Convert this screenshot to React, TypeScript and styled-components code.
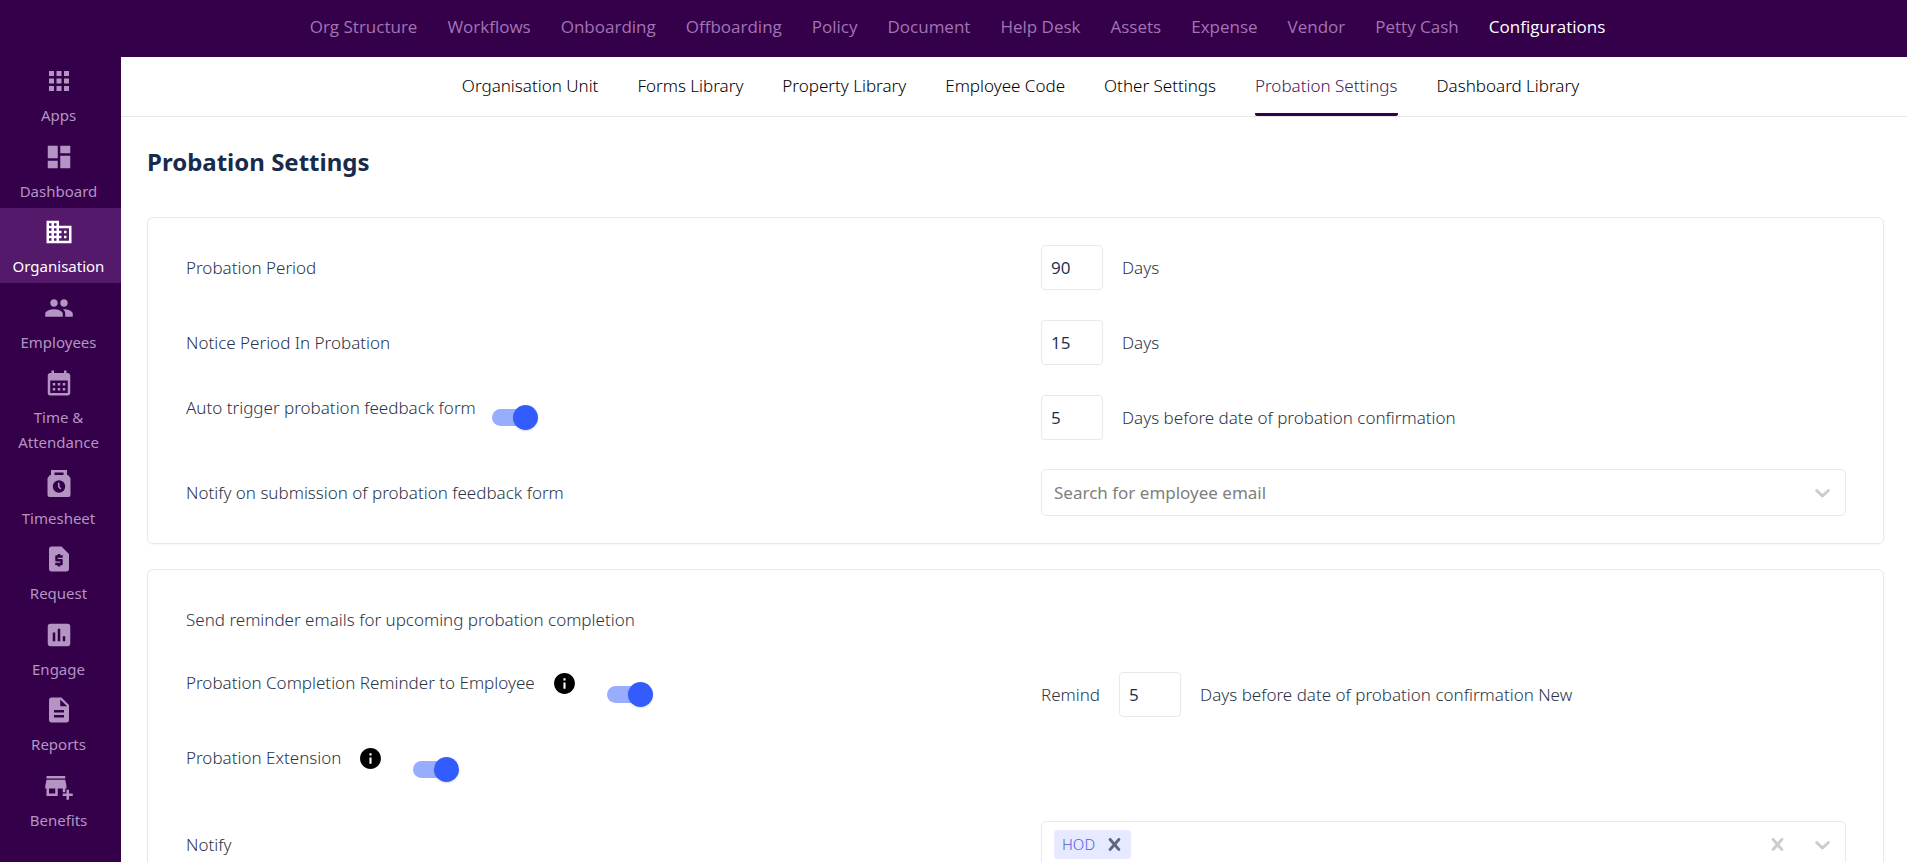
import React, { useState } from "react";
import styled, { createGlobalStyle } from "styled-components";
import {
  MdApps,
  MdDashboard,
  MdBusiness,
  MdGroup,
  MdCalendarMonth,
  MdRequestPage,
  MdInsertChart,
  MdDescription,
  MdAddBusiness,
  MdInfo,
} from "react-icons/md";

const colors = {
  brand: "#34004a",
  brandActive: "#54196b",
  muted: "#b394c2",
  navMuted: "#a274b4",
  text: "#2a3446",
  heading: "#172b4d",
  line: "#e9e9ea",
  blue: "#335cff",
};

const GlobalStyle = createGlobalStyle`
  *, *::before, *::after { box-sizing: border-box; }
  body {
    margin: 0;
    background: #fff;
    color: ${colors.text};
    font: 300 17px/25px "Noto Sans", "Open Sans", sans-serif;
  }
  button, input { font: inherit; color: inherit; }
  ul { list-style: none; margin: 0; padding: 0; }
  a { color: inherit; text-decoration: none; }
`;

const Shell = styled.div`
  display: grid;
  grid-template-columns: 121px minmax(0, 1fr);
  grid-template-rows: 57px minmax(0, 1fr);
  height: 100vh;
`;

const TopBar = styled.nav`
  grid-column: 1 / -1;
  background: ${colors.brand};
  padding-left: 8px;
`;

const TopList = styled.ul`
  display: flex;
  justify-content: center;
  align-items: center;
  gap: 30px;
  height: 53px;
  white-space: nowrap;
`;

const TopLink = styled.a<{ $active?: boolean }>`
  color: ${(p) => (p.$active ? "#fff" : colors.navMuted)};
  font-family: "Open Sans", "Noto Sans", sans-serif;
  font-weight: 400;
`;

const SideBar = styled.nav`
  background: ${colors.brand};
  overflow: hidden;
`;

const SideList = styled.ul`
  display: flex;
  flex-direction: column;
  justify-content: space-between;
  height: 100%;
  padding-bottom: 25px;
`;

const SideLink = styled.a<{ $active?: boolean }>`
  display: flex;
  flex-direction: column;
  align-items: center;
  gap: 7px;
  padding: 9px 6px 4px 2px;
  text-align: center;
  font-weight: 400;
  font-size: 15px;
  color: ${(p) => (p.$active ? "#fff" : colors.muted)};
  background: ${(p) => (p.$active ? colors.brandActive : "transparent")};
  svg { width: 30px; height: 30px; flex: none; }
`;

const Main = styled.main`
  overflow: hidden;
`;

const Tabs = styled.nav`
  border-bottom: 1px solid ${colors.line};
  padding-left: 13px;
`;

const TabList = styled.ul`
  display: flex;
  justify-content: center;
  gap: 39px;
  white-space: nowrap;
`;

const TabLink = styled.a<{ $active?: boolean }>`
  display: block;
  padding: 16px 0 15px;
  color: ${(p) => (p.$active ? "#40205a" : "#000")};
  border-bottom: 3px solid ${(p) => (p.$active ? colors.brand : "transparent")};
  border-radius: 2px;
`;

const Content = styled.div`
  padding: 29px 23px 0 26px;
`;

const Title = styled.h1`
  margin: 0 0 39px;
  font-size: 24px;
  line-height: 32px;
  font-weight: 700;
  color: ${colors.heading};
`;

const Card = styled.section`
  border: 1px solid ${colors.line};
  border-radius: 6px;
  box-shadow: 0 1px 3px rgba(0, 0, 0, 0.04);
  padding: 12px 37px 13px 38px;
  margin-bottom: 25px;
`;

const Row = styled.div`
  display: grid;
  grid-template-columns: 1fr 1fr;
  column-gap: 50px;
  align-items: center;
  height: 75px;
`;

const ToggleRow = styled.div<{ $tall?: boolean }>`
  display: flex;
  align-items: flex-start;
  height: ${(p) => (p.$tall ? 49 : 45)}px;
`;

const Field = styled.div`
  display: flex;
  align-items: center;
  gap: 19px;
`;

const NumberBox = styled.input`
  width: 62px;
  height: 45px;
  padding: 0 9px;
  border: 1px solid ${colors.line};
  border-radius: 4px;
  background: #fff;
  color: ${colors.heading};
  font-family: "Open Sans", "Noto Sans", sans-serif;
  font-weight: 400;
`;

const Switch = styled.input`
  appearance: none;
  display: grid;
  align-items: center;
  align-self: center;
  width: 46px;
  height: 25px;
  margin: 0 0 0 16px;
  cursor: pointer;
  &::before, &::after { content: ""; grid-area: 1 / 1; }
  &::before {
    width: 42px;
    height: 17px;
    border-radius: 9px;
    background: #c4c4c4;
  }
  &::after {
    width: 25px;
    height: 25px;
    border-radius: 50%;
    background: #fafafa;
    box-shadow: 0 1px 2px rgba(0, 0, 0, 0.15);
  }
  &:checked::before { background: #99adff; }
  &:checked::after { justify-self: end; background: ${colors.blue}; }
`;

const InfoButton = styled.button`
  display: flex;
  margin: 0 14px 0 17px;
  padding: 1px 0;
  border: 0;
  background: none;
  color: #000;
  svg { width: 25px; height: 25px; }
`;

const SelectBox = styled.div`
  display: flex;
  align-items: center;
  height: 47px;
  padding: 0 10px 0 12px;
  border: 1px solid ${colors.line};
  border-radius: 5px;
`;

const SelectInput = styled.input`
  flex: 1;
  min-width: 0;
  border: 0;
  padding: 0;
  outline: none;
  background: none;
  font-weight: 400;
  &::placeholder { color: #808080; opacity: 1; }
`;

const IconButton = styled.button<{ $gap?: number }>`
  display: flex;
  padding: 0;
  margin-right: ${(p) => p.$gap ?? 0}px;
  border: 0;
  background: none;
  color: #ccc;
`;

const Tag = styled.span`
  display: flex;
  align-items: center;
  gap: 7px;
  height: 29px;
  padding: 0 4px 0 8px;
  border-radius: 4px;
  background: #e6e9ff;
  color: #5060dc;
  font-size: 15px;
`;

const TagButton = styled.button`
  display: flex;
  padding: 0;
  border: 0;
  background: none;
  color: #5f6680;
`;

const TimesheetIcon = () => (
  <svg viewBox="0 0 30 30" fill="currentColor" fillRule="evenodd" aria-hidden="true">
    <path d="M7 1h16v5h1l2.500 3v17a2 2 0 0 1-2 2h-19a2 2 0 0 1-2-2V9L6 6h1zm3.500 2.500V6h9V3.500zM15 11.300a6.200 6.200 0 1 0 0 12.400a6.200 6.200 0 1 0 0-12.400z" />
    <path d="M14 13.800h1.500v3.700l1.800 2-1 1-2.300-2.500z" />
  </svg>
);

const Chevron = () => (
  <svg width="25" height="25" viewBox="0 0 20 20" fill="currentColor" aria-hidden="true">
    <path d="M4.516 7.548c0.436-0.446 1.043-0.481 1.576 0l3.908 3.747 3.908-3.747c0.533-0.481 1.141-0.446 1.574 0 0.436 0.445 0.408 1.197 0 1.615-0.406 0.418-4.695 4.502-4.695 4.502-0.217 0.223-0.502 0.335-0.787 0.335s-0.570-0.112-0.789-0.335c0 0-4.287-4.084-4.695-4.502s-0.436-1.170 0-1.615z" />
  </svg>
);

const Cross = () => (
  <svg width="25" height="25" viewBox="0 0 20 20" fill="currentColor" aria-hidden="true">
    <path d="M14.348 14.849c-0.469 0.469-1.229 0.469-1.697 0l-2.651-3.030-2.651 3.029c-0.469 0.469-1.229 0.469-1.697 0-0.469-0.469-0.469-1.229 0-1.697l2.758-3.150-2.759-3.152c-0.469-0.469-0.469-1.228 0-1.697s1.228-0.469 1.697 0l2.652 3.031 2.651-3.031c0.469-0.469 1.228-0.469 1.697 0s0.469 1.229 0 1.697l-2.758 3.152 2.758 3.150c0.469 0.469 0.469 1.229 0 1.698z" />
  </svg>
);

const topItems = [
  "Org Structure", "Workflows", "Onboarding", "Offboarding", "Policy", "Document",
  "Help Desk", "Assets", "Expense", "Vendor", "Petty Cash", "Configurations",
];

const sideItems = [
  { label: "Apps", Icon: MdApps },
  { label: "Dashboard", Icon: MdDashboard },
  { label: "Organisation", Icon: MdBusiness },
  { label: "Employees", Icon: MdGroup },
  { label: "Time & Attendance", Icon: MdCalendarMonth },
  { label: "Timesheet", Icon: TimesheetIcon },
  { label: "Request", Icon: MdRequestPage },
  { label: "Engage", Icon: MdInsertChart },
  { label: "Reports", Icon: MdDescription },
  { label: "Benefits", Icon: MdAddBusiness },
];

const tabItems = [
  "Organisation Unit", "Forms Library", "Property Library", "Employee Code",
  "Other Settings", "Probation Settings", "Dashboard Library",
];

const NumberField = ({ id, initial }: { id: string; initial: string }) => {
  const [value, setValue] = useState(initial);
  return (
    <NumberBox
      id={id}
      value={value}
      inputMode="numeric"
      onChange={(e) => setValue(e.target.value)}
    />
  );
};

const ToggleField = ({ id, label, info }: { id: string; label: string; info?: boolean }) => (
  <ToggleRow $tall={info}>
    <label htmlFor={id}>{label}</label>
    {info && (
      <InfoButton type="button" aria-label={`About ${label}`}>
        <MdInfo />
      </InfoButton>
    )}
    <Switch id={id} type="checkbox" role="switch" defaultChecked />
  </ToggleRow>
);

export default function App() {
  return (
    <>
      <GlobalStyle />
      <Shell>
        <TopBar aria-label="Organisation">
          <TopList>
            {topItems.map((item) => (
              <li key={item}>
                <TopLink href="#" $active={item === "Configurations"}>{item}</TopLink>
              </li>
            ))}
          </TopList>
        </TopBar>
        <SideBar aria-label="Modules">
          <SideList>
            {sideItems.map(({ label, Icon }) => (
              <li key={label}>
                <SideLink href="#" $active={label === "Organisation"}>
                  <Icon />
                  <span>{label}</span>
                </SideLink>
              </li>
            ))}
          </SideList>
        </SideBar>
        <Main>
          <Tabs aria-label="Configurations">
            <TabList>
              {tabItems.map((item) => (
                <li key={item}>
                  <TabLink href="#" $active={item === "Probation Settings"}>{item}</TabLink>
                </li>
              ))}
            </TabList>
          </Tabs>
          <Content>
            <Title>Probation Settings</Title>
            <Card>
              <Row>
                <label htmlFor="period">Probation Period</label>
                <Field>
                  <NumberField id="period" initial="90" />
                  <span>Days</span>
                </Field>
              </Row>
              <Row>
                <label htmlFor="notice">Notice Period In Probation</label>
                <Field>
                  <NumberField id="notice" initial="15" />
                  <span>Days</span>
                </Field>
              </Row>
              <Row>
                <ToggleField id="auto" label="Auto trigger probation feedback form" />
                <Field>
                  <NumberField id="feedback-days" initial="5" />
                  <label htmlFor="feedback-days">Days before date of probation confirmation</label>
                </Field>
              </Row>
              <Row>
                <label htmlFor="submission">Notify on submission of probation feedback form</label>
                <SelectBox>
                  <SelectInput id="submission" role="combobox" aria-expanded="false" placeholder="Search for employee email" />
                  <IconButton type="button" aria-label="Open"><Chevron /></IconButton>
                </SelectBox>
              </Row>
            </Card>
            <Card>
              <Row>
                <span>Send reminder emails for upcoming probation completion</span>
              </Row>
              <Row>
                <ToggleField id="reminder" label="Probation Completion Reminder to Employee" info />
                <Field>
                  <label htmlFor="remind-days">Remind</label>
                  <NumberField id="remind-days" initial="5" />
                  <span>Days before date of probation confirmation New</span>
                </Field>
              </Row>
              <Row>
                <ToggleField id="extension" label="Probation Extension" info />
              </Row>
              <Row>
                <label htmlFor="notify">Notify</label>
                <SelectBox>
                  <Tag>
                    HOD
                    <TagButton type="button" aria-label="Remove HOD"><Cross /></TagButton>
                  </Tag>
                  <SelectInput id="notify" role="combobox" aria-expanded="false" />
                  <IconButton type="button" aria-label="Clear" $gap={20}><Cross /></IconButton>
                  <IconButton type="button" aria-label="Open"><Chevron /></IconButton>
                </SelectBox>
              </Row>
            </Card>
          </Content>
        </Main>
      </Shell>
    </>
  );
}
